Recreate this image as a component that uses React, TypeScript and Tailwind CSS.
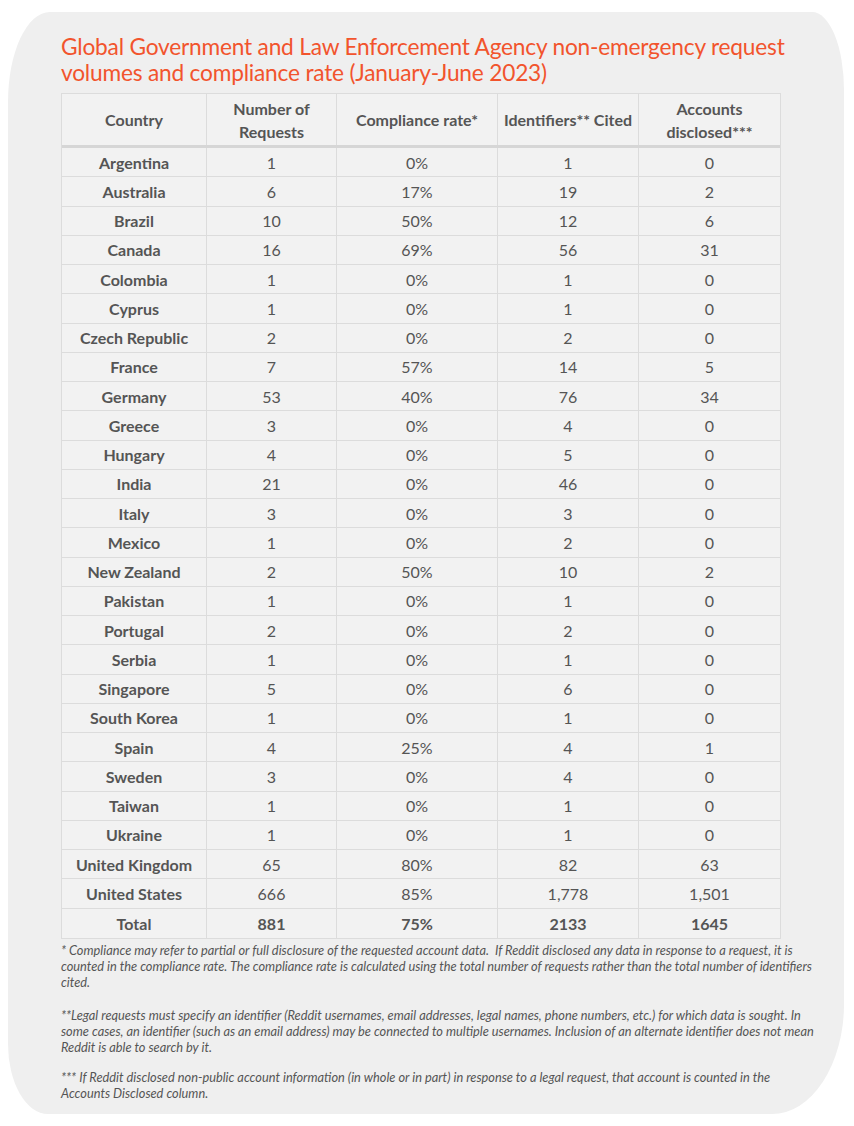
import React from "react";

const rows: [string, string, string, string, string][] = [
  ["Argentina", "1", "0%", "1", "0"],
  ["Australia", "6", "17%", "19", "2"],
  ["Brazil", "10", "50%", "12", "6"],
  ["Canada", "16", "69%", "56", "31"],
  ["Colombia", "1", "0%", "1", "0"],
  ["Cyprus", "1", "0%", "1", "0"],
  ["Czech Republic", "2", "0%", "2", "0"],
  ["France", "7", "57%", "14", "5"],
  ["Germany", "53", "40%", "76", "34"],
  ["Greece", "3", "0%", "4", "0"],
  ["Hungary", "4", "0%", "5", "0"],
  ["India", "21", "0%", "46", "0"],
  ["Italy", "3", "0%", "3", "0"],
  ["Mexico", "1", "0%", "2", "0"],
  ["New Zealand", "2", "50%", "10", "2"],
  ["Pakistan", "1", "0%", "1", "0"],
  ["Portugal", "2", "0%", "2", "0"],
  ["Serbia", "1", "0%", "1", "0"],
  ["Singapore", "5", "0%", "6", "0"],
  ["South Korea", "1", "0%", "1", "0"],
  ["Spain", "4", "25%", "4", "1"],
  ["Sweden", "3", "0%", "4", "0"],
  ["Taiwan", "1", "0%", "1", "0"],
  ["Ukraine", "1", "0%", "1", "0"],
  ["United Kingdom", "65", "80%", "82", "63"],
  ["United States", "666", "85%", "1,778", "1,501"],
];

const cols = "grid grid-cols-[145px_130px_161px_141px_141px]";

function Row({ r, bold, last }: { r: string[]; bold?: boolean; last?: boolean }) {
  return (
    <div className={`${cols} h-[29.26px] ${last ? "" : "border-b border-[#dcdcdc]"}`}>
      {r.map((c, i) => (
        <div
          key={i}
          className={`flex items-center justify-center pt-[1px] ${i < 4 ? "border-r border-[#dcdcdc]" : ""} ${
            i === 0 || bold ? "font-bold" : "font-normal"
          }`}
        >
          {c}
        </div>
      ))}
    </div>
  );
}

export default function App() {
  return (
    <div className="min-h-[1126px] bg-white pt-[12px] pl-[8px]" style={{ fontFamily: "Lato, 'Open Sans', sans-serif" }}>
      <div className="w-[836px] h-[1102px] bg-[#efefef] rounded-[42px_32px_72px_40px/90px_78px_110px_70px] pl-[53px] pt-[22px]">
        <h1 className="text-[#f2542d] text-[22.7px] leading-[26px] tracking-[-0.2px] font-normal">
          Global Government and Law Enforcement Agency non-emergency request
          <br />
          volumes and compliance rate (January-June 2023)
        </h1>
        <div className="mt-[7px] w-[720px] border border-[#dcdcdc] bg-[#f2f2f2] text-[#555555] text-[16px]">
          <div className={`${cols} h-[54px] border-b-[3px] border-[#d6d6d6] font-bold text-[16px] leading-[23px]`}>
            <div className="flex items-center justify-center border-r border-[#dcdcdc]">Country</div>
            <div className="flex items-center justify-center text-center border-r border-[#dcdcdc]">
              Number of
              <br />
              Requests
            </div>
            <div className="flex items-center justify-center border-r border-[#dcdcdc]">Compliance rate*</div>
            <div className="flex items-center justify-center border-r border-[#dcdcdc]">Identifiers** Cited</div>
            <div className="flex items-center justify-center text-center">
              Accounts
              <br />
              disclosed***
            </div>
          </div>
          {rows.map((r) => (
            <Row key={r[0]} r={r} />
          ))}
          <Row r={["Total", "881", "75%", "2133", "1645"]} bold last />
        </div>
        <div className="mt-[3px] w-[760px] text-[#555555] italic text-[12.8px] leading-[16px]">
          <p>
            * Compliance may refer to partial or full disclosure of the requested account data.&nbsp; If Reddit
            disclosed any data in response to a request, it is counted in the compliance rate. The compliance rate
            is calculated using the total number of requests rather than the total number of identifiers cited.
          </p>
          <p className="mt-[17px]">
            **Legal requests must specify an identifier (Reddit usernames, email addresses, legal names, phone
            numbers, etc.) for which data is sought. In some cases, an identifier (such as an email address) may be
            connected to multiple usernames. Inclusion of an alternate identifier does not mean Reddit is able to
            search by it.
          </p>
          <p className="mt-[14px]">
            *** If Reddit disclosed non-public account information (in whole or in part) in response to a legal
            request, that account is counted in the Accounts Disclosed column.
          </p>
        </div>
      </div>
    </div>
  );
}
